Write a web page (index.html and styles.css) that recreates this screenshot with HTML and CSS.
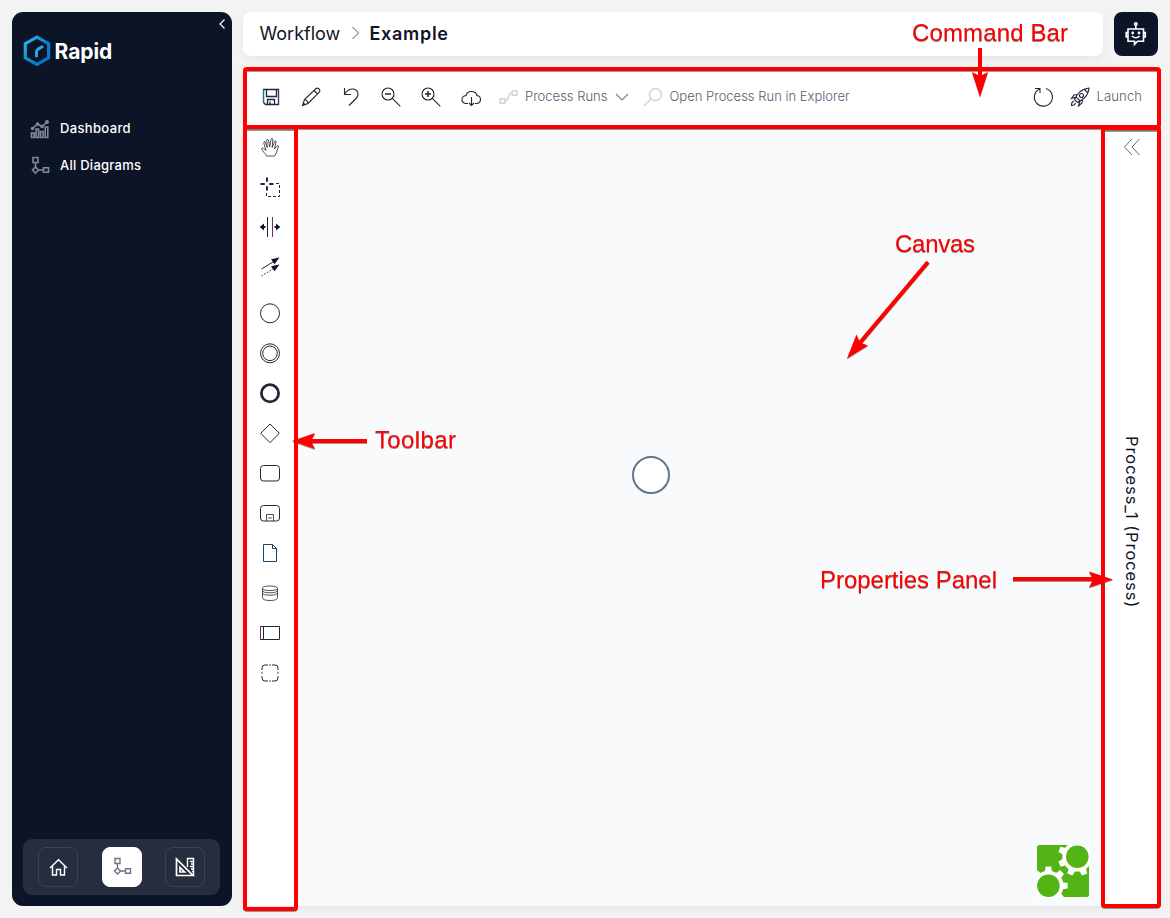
FILE: index.html
```
<!DOCTYPE html>
<html lang="en">
<head>
<meta charset="utf-8">
<title>Rapid Workflow</title>
<link rel="stylesheet" href="styles.css">
</head>
<body>
<svg class="defs" width="0" height="0">
  <defs>
    <linearGradient id="hex" x1="0" y1="0" x2="1" y2="1"><stop offset="0" stop-color="#35b6ea"/><stop offset=".5" stop-color="#0b86d0"/><stop offset="1" stop-color="#0b72c0"/></linearGradient>
    <symbol id="diagram" viewBox="0 0 20 20"><path d="M3 1.500h5v5H3zM5.500 6.500v4.500M5.500 11l3 3-3 3-3-3zM8.500 14h5M13.500 11.700h5v4.600h-5z"/></symbol>
  </defs>
</svg>
<div class="app">
  <aside class="sidebar">
    <div class="brand">
      <svg width="28" height="32" viewBox="0 0 28 32"><path d="M14 2.200 25.600 8.700v14.200L14 29.500 2.300 22.900V8.700z" fill="none" stroke="url(#hex)" stroke-width="3.200"/><path d="M13.500 22.300v-5.500q0-1.800 1.600-2.700l5-2.800" fill="none" stroke="#2ba5e0" stroke-width="3"/></svg>
      <span class="brand-name">Rapid</span>
      <svg class="collapse" width="8" height="12" viewBox="0 0 8 12"><path d="M6.500 1.500 2 6l4.500 4.500"/></svg>
    </div>
    <nav class="nav">
      <a class="nav-item"><svg class="nav-icon" width="20" height="20" viewBox="0 0 20 20"><path d="M1.500 14h2.600v4.500H1.500zM6 10h2.500v8.500H6zM10.500 12.500h2.600v6h-2.600zM15.200 8h2.600v10.500h-2.600zM2.500 9.500l5-4.500 4.500 2.500 5-4.500"/><circle cx="2.500" cy="9.500" r="1"/><circle cx="7.500" cy="5" r="1"/><circle cx="12" cy="7.500" r="1"/><circle cx="17" cy="3" r="1.200"/></svg><span class="t-dash">Dashboard</span></a>
      <a class="nav-item"><svg class="nav-icon" width="20" height="20"><use href="#diagram"/></svg><span class="t-all">All Diagrams</span></a>
    </nav>
    <div class="switcher">
      <span class="switch"><svg width="20" height="20" viewBox="0 0 20 20"><path d="M2 11 10.500 2.700 19 11M4.500 9v9h4v-5.500h4V18h4V9"/></svg></span>
      <span class="switch active"><svg width="20" height="20"><use href="#diagram"/></svg></span>
      <span class="switch"><svg width="20" height="20" viewBox="0 0 20 20"><path d="M1.500 2v16.500H18zM5 10.500v4.500h4.500z" stroke-width="1.700"/><path d="M12.500 10V1.500h6v17M15 4.500h3M16 7h2M15 9.500h3M16 12h2M17 14.500h1"/></svg></span>
    </div>
  </aside>

  <main class="main">
    <div class="top">
      <header class="crumbs"><span class="t-work">Workflow</span><svg width="9" height="14" viewBox="0 0 9 14"><path d="M1.500 1 7.500 7l-6 6"/></svg><span class="t-example">Example</span></header>
      <button class="bot"><svg width="24" height="26" viewBox="0 0 24 26"><path d="M4 8h15.500v12.300h-6L10.500 23.500v-3.200H4zM11.800 8V4M4 11.500H2.200v4.500H4M19.500 11.500h1.800v4.500h-1.800M8 15q3.800 3.500 7.600 0"/><circle cx="11.800" cy="3" r="1.200"/><circle cx="8.700" cy="12" r=".6"/><circle cx="15" cy="12" r=".6"/></svg></button>
    </div>

    <section class="editor">
      <div class="commands">
        <span class="cmd"><svg viewBox="0 0 24 24"><path d="M4.500 4.500h15v15h-13l-2-2zM7.500 4.500v7h10v-7M8.500 19.500v-5h7v5M11 16.500v3" stroke-width="1.300"/><path d="M4.500 4.500v13" stroke="#1d6f9f"/><path d="M19.500 4.500v15" stroke="#5a2b6e"/></svg></span>
        <span class="cmd"><svg viewBox="0 0 24 24"><path d="m3.500 20.500 2-6L17 3.500q1.500-1 3 .5t.5 3L9 18.500zM5.500 14.500q3 .5 3.500 4M15 5.500l3.500 3.500M3.500 20.500l1-2.500 1.500 1.500z"/></svg></span>
        <span class="cmd"><svg viewBox="0 0 24 24"><path d="M5.500 3v6.500H12M5.500 9q4-5.500 9-5 4.500 1 4.500 5.500 0 2-2 4l-7 7"/></svg></span>
        <span class="cmd"><svg viewBox="0 0 24 24"><circle cx="9" cy="9" r="6"/><path d="m13.300 13.300 8 8"/><path d="M6 9h6" stroke-width="1.500"/></svg></span>
        <span class="cmd"><svg viewBox="0 0 24 24"><circle cx="9" cy="9" r="6"/><path d="m13.300 13.300 8 8"/><path d="M6 9h6M9 6v6" stroke-width="1.500"/></svg></span>
        <span class="cmd"><svg viewBox="0 0 24 24"><path d="M9 18.500H6.500q-3.500-.5-3.500-4t4-4q1-4 5.500-4t5.500 4q3.500.5 3.500 4t-3.500 4H16M12.500 12v8.500M10 18l2.500 2.500L15 18"/></svg></span>
        <span class="cmd-text runs"><svg class="muted" width="20" height="16" viewBox="0 0 20 16"><path d="M1.200 9.700h4.600v4.600H1.200zM13.200 1.700h4.600v4.600h-4.600zM5.800 12q2.500 0 3.500-4t3.900-4"/></svg><span class="t-runs">Process Runs</span><svg class="chev" width="14" height="8" viewBox="0 0 14 8"><path d="m1 1 6 6 6-6"/></svg></span>
        <span class="cmd-text open"><svg class="muted" width="20" height="20" viewBox="0 0 20 20"><circle cx="12.500" cy="7.500" r="6"/><path d="M8.200 11.800 1 19"/></svg><span class="t-open">Open Process Run in Explorer</span></span>
        <span class="cmd refresh"><svg viewBox="0 0 24 24"><path d="M8.500 4A9 9 0 1 0 15 3.500M4 3.500h5V8"/></svg></span>
        <span class="cmd-text launch"><svg class="rocket" width="20" height="20" viewBox="0 0 20 20"><path d="M6 10Q10 2 19 1q-.5 8.500-9 13zM7.500 7.500 4 8l-2.500 3.500L6 10M12.500 12.500 12 16l-3.500 3 1.500-5M6 10l-1.500 2.500 3 3L10 14M14.500 2.500l3 3M4 14q-2.500.5-2.500 4.500Q5 18.500 5.500 16"/><circle cx="11.500" cy="8.500" r="2"/></svg><span class="t-launch">Launch</span></span>
      </div>

      <div class="workspace">
        <div class="tools">
          <span class="tool"><svg viewBox="0 0 24 24"><path d="M8.500 21q-.5-2-2.500-3.500-3-3.500-2.300-4.300t2 .3L8 15.500 5.800 8Q5.500 6.500 7 6.500l2.300 6L8.700 5q.5-1.500 1.700 0l1.300 7L13 4q1-1.500 1.800 0l-.6 8.500L16.800 6q1.300-.5 1.200 1l-1.500 7q2-3.500 3.500-3.500 1.500 1-.5 3.500-.5 4-3 7z" class="fine"/></svg></span>
          <span class="tool"><svg viewBox="0 0 24 24"><path d="M2.500 9h4.300M11.200 9h4.300M9 2.500v4.300M9 11.200v4.300" stroke-width="2"/><path d="M18 8.500h3.500v13h-13V18" stroke-dasharray="3 2"/></svg></span>
          <span class="tool"><svg viewBox="0 0 24 24"><path d="M9.500 2v20"/><path d="M14.500 2v20" stroke="#722b64"/><path d="M4 12h3.500M16.500 12H20" stroke-width="1.800"/><path d="M1.700 12l4.300-3.500v7zM22.300 12 18 8.500v7z" fill="#0d1528" stroke="none"/></svg></span>
          <span class="tool"><svg viewBox="0 0 24 24"><path d="m3.500 14 13-8"/><path d="m3.500 21 13-8" stroke-dasharray="1.500 1.700"/><path d="m21.500 2.500-8.500 1.700 3.500 5zM21.500 9.500 13 11.200l3.500 5z" fill="#0d1528" stroke="none"/></svg></span>
          <span class="tool event"><svg viewBox="0 0 24 24"><circle cx="12" cy="12.300" r="9.500"/></svg></span>
          <span class="tool"><svg viewBox="0 0 24 24"><circle cx="12" cy="12.300" r="9.500"/><circle cx="12" cy="12.300" r="7.300"/></svg></span>
          <span class="tool"><svg viewBox="0 0 24 24"><circle cx="12" cy="12.300" r="8.600" stroke-width="2.800"/></svg></span>
          <span class="tool"><svg viewBox="0 0 24 24"><path d="m12 3 9.300 9.300-9.300 9.300-9.300-9.300z"/></svg></span>
          <span class="tool"><svg viewBox="0 0 24 24"><rect x="2.500" y="4.500" width="19" height="15.500" rx="3"/></svg></span>
          <span class="tool"><svg viewBox="0 0 24 24"><rect x="2.500" y="4.500" width="19" height="15.500" rx="3"/><path d="M8.500 20v-6.500h7V20M10 17h4" class="fine"/></svg></span>
          <span class="tool"><svg viewBox="0 0 24 24"><path d="M5.500 3.500h9l4 4v13h-13zM14.500 3.500v4h4" stroke="#17486d"/></svg></span>
          <span class="tool"><svg viewBox="0 0 24 24"><path d="M4.500 7.500v9q0 3 7.500 3t7.500-3v-9q0-2.500-7.500-2.500T4.500 7.500Q5 9.500 12 9.500t7.500-2M4.500 9.500q.5 2.300 7.500 2.300t7.500-2.300M4.500 12q.5 2.200 7.500 2.200t7.500-2.200" class="fine"/></svg></span>
          <span class="tool"><svg viewBox="0 0 24 24"><path d="M2.500 5.500h19v13h-19zM5.500 5.500v13"/><path d="M2.500 5v14" stroke="#74306e"/></svg></span>
          <span class="tool"><svg viewBox="0 0 24 24"><path d="M4 9V7q0-3 3-3h3M14 4h3q3 0 3 3v2M20 15v2q0 3-3 3h-3M10 20H7q-3 0-3-3v-2M4 11.200v1.600M20 11.200v1.600M11.200 4h1.600M11.200 20h1.600"/></svg></span>
        </div>
        <div class="canvas">
          <svg class="start" width="38" height="38" viewBox="0 0 38 38"><circle cx="19" cy="19" r="18" fill="#fff" stroke="#64748b" stroke-width="2"/></svg>
          <svg class="bpmn" width="53" height="53" viewBox="0 0 53 53">
            <rect width="52" height="52" rx="2.500" fill="#52b415"/>
            <path d="M40 0h13v12H40zM0 40h12v13H0z" fill="#fff"/>
            <g fill="#fff">
              <circle cx="40.300" cy="11.700" r="15"/><circle cx="11.400" cy="40.700" r="15"/>
              <g transform="translate(40.300 11.700)"><path id="tooth" d="M14-3.500 19.300-2.800v5.600L14 3.500z" transform="rotate(22.500)"/><use href="#tooth" transform="rotate(45)"/><use href="#tooth" transform="rotate(90)"/><use href="#tooth" transform="rotate(135)"/><use href="#tooth" transform="rotate(180)"/></g>
              <g transform="translate(11.400 40.700) rotate(-22.500)"><use href="#tooth"/><use href="#tooth" transform="rotate(45)"/><use href="#tooth" transform="rotate(-45)"/><use href="#tooth" transform="rotate(-90)"/><use href="#tooth" transform="rotate(-135)"/></g>
            </g>
            <g fill="#52b415"><circle cx="40.300" cy="11.700" r="11.300"/><circle cx="11.400" cy="40.700" r="11.300"/></g>
          </svg>
        </div>
        <aside class="properties">
          <svg width="18" height="18" viewBox="0 0 18 18"><path d="M9 1 1.500 9 9 17M16.500 1 9 9l7.500 8"/></svg>
          <span class="props-title">Process_1 (Process)</span>
        </aside>
      </div>
    </section>
  </main>
</div>

<svg class="notes" width="1170" height="918" viewBox="0 0 1170 918">
  <g class="shade"><rect x="245" y="69" width="914" height="58" rx="2"/><rect x="245" y="128" width="51" height="781" rx="2"/><rect x="1103" y="129" width="56" height="777" rx="2"/></g>
  <g class="frames"><rect x="245" y="69" width="914" height="58" rx="2"/><rect x="245" y="127" width="51" height="782" rx="2"/><rect x="1103" y="128" width="56" height="778" rx="2"/></g>
  <g class="arrows">
    <path class="line" d="M980 48v28M367 441h-56M1013 579h80M928 262 858 345"/>
    <path d="m980 97-8-25 8 4 8-4zM292 441l23-8-4 8 4 8zM1113 579.500l-24-8 4 8-4 8zM847 358.500l9.500-24 3.500 8 8 3z"/>
  </g>
  <g class="labels">
    <text x="912" y="41" textLength="156">Command Bar</text>
    <text x="895" y="252" textLength="80">Canvas</text>
    <text x="375" y="447.500" textLength="81">Toolbar</text>
    <text x="820" y="587.500" textLength="177">Properties Panel</text>
  </g>
</svg>
</body>
</html>
```
FILE: styles.css
```
* { box-sizing: border-box; }
body { margin: 0; background: #f3f3f3; color: #0d1528; font-family: Inter, "Open Sans", sans-serif; overflow: hidden; }
svg { display: block; flex: none; }
.defs { position: absolute; }
.app { display: flex; gap: 11px; width: 1170px; height: 918px; padding: 12px; }

.sidebar { display: flex; flex-direction: column; width: 220px; padding: 0 12px 11px 11px; border-radius: 11px; background: #0c1427; color: #fff; }
.brand { display: flex; align-items: center; height: 78px; gap: 4px; margin-left: -0.5px; }
.brand-name { flex: 1; font-size: 21px; font-weight: 700; letter-spacing: -0.05px; }
.collapse { align-self: flex-start; margin: 6px -5.500px 0 0; fill: none; stroke: #fff; stroke-width: 1.2; }
.nav { display: flex; flex-direction: column; padding: 20px 0 0 7px; }
.nav-item { display: flex; align-items: center; gap: 10px; height: 37px; font-size: 13px; font-weight: 500; white-space: nowrap; }
.nav-item span { padding-bottom: 2px; }
.t-dash { letter-spacing: .35px; }
.t-all { letter-spacing: .25px; }
.nav-icon { fill: none; stroke: #858994; stroke-width: 1.6; }
.switcher { display: flex; justify-content: space-between; align-items: center; height: 56px; margin-top: auto; padding: 0 15px; border-radius: 9px; background: #262d3f; }
.switch { display: grid; place-items: center; width: 40px; height: 40px; border: 1px solid #3b4253; border-radius: 8px; fill: none; stroke: #fff; stroke-width: 1.4; }
.switch.active { border-color: #fff; background: #fff; stroke: #6b7585; }

.main { display: flex; flex-direction: column; gap: 12px; width: 915px; }
.top { display: flex; gap: 11px; height: 44px; }
.crumbs { display: flex; align-items: center; width: 860px; padding: 0 17px 2px 16.500px; border-radius: 8px; background: #fff; box-shadow: 0 3px 8px rgb(0 0 0 / 5%); font-size: 18px; white-space: nowrap; }
.crumbs svg { margin: 0 10px; fill: none; stroke: #4c5361; }
.t-work { width: 81px; }
.t-example { font-weight: 600; letter-spacing: .7px; }
.bot { display: grid; place-items: center; width: 44px; height: 44px; padding: 0; border: 0; border-radius: 8px; background: #0c1427; fill: none; stroke: #fff; stroke-width: 1.6; }

.editor { display: flex; flex: 1; flex-direction: column; background: #fff; box-shadow: 0 3px 8px rgb(0 0 0 / 5%); }
.commands { display: flex; align-items: center; height: 59px; padding: 0 0 2px 8px; fill: none; stroke: #202738; stroke-width: 1.1; }
.cmd { display: grid; flex: none; place-items: center; width: 40px; height: 40px; }
.cmd svg, .tool svg { width: 24px; height: 24px; }
.cmd-text { display: flex; align-items: center; height: 40px; color: #565e70; font-size: 13px; font-weight: 300; white-space: nowrap; }
.cmd-text span { padding-bottom: 1px; stroke: none; }
.runs { width: 144px; margin-left: 8px; gap: 6px; }
.runs .chev { margin-left: 2px; stroke: #7b808b; }
.t-runs { width: 82px; }
.open { gap: 6.500px; }
.muted { stroke: #d3d3d3; stroke-width: 1.5; }
.refresh { margin-left: auto; }
.launch { width: 95px; padding-left: 7px; gap: 6.500px; }
.t-launch { letter-spacing: .15px; }

.workspace { display: flex; flex: 1; }
.tools { display: flex; flex-direction: column; width: 54px; fill: none; stroke: #202738; stroke-width: 1; }
.tool { display: grid; place-items: center; height: 40px; }
.event { margin-top: 6px; }
.fine { stroke-width: .8; }
.canvas { position: relative; flex: 1; background: #f9fafc; }
.start { position: absolute; left: 335px; top: 329px; }
.bpmn { position: absolute; left: 740px; top: 718px; }
.properties { display: flex; flex-direction: column; align-items: center; width: 56px; padding: 11px 0 0 3px; background: #fff; fill: none; stroke: #566b80; }
.props-title { margin-top: 280px; stroke: none; writing-mode: vertical-rl; font-size: 16.5px; letter-spacing: .92px; white-space: nowrap; }

.notes { position: absolute; inset: 0; pointer-events: none; }
.frames { fill: none; stroke: #f00; stroke-width: 4; }
.shade { fill: none; stroke: #777; stroke-width: 4; transform: translateY(.7px); }
.arrows { fill: #f00; filter: drop-shadow(0 1px 0 rgb(70 70 70 / 55%)); }
.line { fill: none; stroke: #f00; stroke-width: 4; }
.labels { fill: #f00; font: 24px "Liberation Sans", Arial, sans-serif; filter: drop-shadow(0 1px .4px rgb(70 70 70 / 60%)); }
```
